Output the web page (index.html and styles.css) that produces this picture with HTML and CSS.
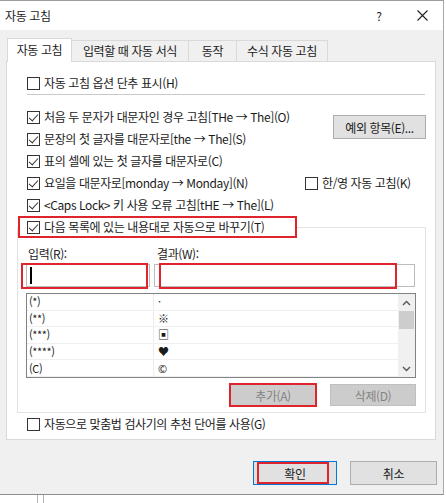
FILE: index.html
```html
<!DOCTYPE html>
<html lang="ko">
<head>
    <meta charset="UTF-8">
    <title>자동 고침</title>
    <link rel="stylesheet" href="styles.css">
</head>
<body>
    <div class="dialog">
        <div class="titlebar">
            <span class="title">자동 고침</span>
            <span class="help">?</span>
            <span class="close">
                <svg width="11" height="11" viewBox="0 0 11 11"><path d="M0.5 0.5 L10.5 10.5 M10.5 0.5 L0.5 10.5" stroke="#222" stroke-width="1.1"/></svg>
            </span>
        </div>

        <div class="content">
            <div class="tabs">
                <div class="tab active" style="width:65px">자동 고침</div>
                <div class="tab" style="width:118px">입력할 때 자동 서식</div>
                <div class="tab" style="width:49px">동작</div>
                <div class="tab" style="width:92px">수식 자동 고침</div>
            </div>

            <div class="panel">
                <label class="check indent"><span class="box"></span>자동 고침 옵션 단추 표시(H)</label>
                <div class="sep"></div>

                <div class="opts">
                    <label class="check indent"><span class="box on"></span>처음 두 문자가 대문자인 경우 고침[THe → The](O)</label>
                    <button class="btn except">예외 항목(E)...</button>
                    <label class="check indent"><span class="box on"></span>문장의 첫 글자를 대문자로[the → The](S)</label>
                    <label class="check indent"><span class="box on"></span>표의 셀에 있는 첫 글자를 대문자로(C)</label>
                    <label class="check indent"><span class="box on"></span>요일을 대문자로[monday → Monday](N)</label>
                    <label class="check side"><span class="box"></span>한/영 자동 고침(K)</label>
                    <label class="check indent span"><span class="box on"></span>&lt;Caps Lock&gt; 키 사용 오류 고침[tHE → The](L)</label>
                </div>

                <fieldset class="group">
                    <legend class="legend"><span class="box on"></span>다음 목록에 있는 내용대로 자동으로 바꾸기(T)</legend>
                    <div class="group-body">
                        <div class="fields-labels">
                            <span class="lbl first">입력(R):</span>
                            <span class="lbl">결과(W):</span>
                        </div>
                        <div class="fields">
                            <div class="field in"><span class="caret"></span><span class="mark mark-in"></span></div>
                            <div class="field out"><span class="mark mark-out"></span></div>
                        </div>

                        <div class="list">
                            <div class="rows">
                                <div class="row"><span>(*)</span><span>·</span></div>
                                <div class="row"><span>(**)</span><span>※</span></div>
                                <div class="row"><span>(***)</span><span>▣</span></div>
                                <div class="row"><span>(****)</span><span>♥</span></div>
                                <div class="row"><span>(C)</span><span>©</span></div>
                            </div>
                            <div class="scroll">
                                <div class="arrow">
                                    <svg width="9" height="6" viewBox="0 0 9 6"><path d="M1 5 L4.5 1.5 L8 5" fill="none" stroke="#555" stroke-width="1.4"/></svg>
                                </div>
                                <div class="thumb"></div>
                                <div class="track"></div>
                                <div class="arrow">
                                    <svg width="9" height="6" viewBox="0 0 9 6"><path d="M1 1 L4.5 4.5 L8 1" fill="none" stroke="#555" stroke-width="1.4"/></svg>
                                </div>
                            </div>
                        </div>

                        <div class="actions">
                            <button class="btn disabled">추가(A)<span class="mark mark-add"></span></button>
                            <button class="btn disabled">삭제(D)</button>
                        </div>
                    </div>
                </fieldset>

                <label class="check indent"><span class="box"></span>자동으로 맞춤법 검사기의 추천 단어를 사용(G)</label>
            </div>

            <div class="footer">
                <button class="btn ok">확인<span class="mark mark-ok"></span></button>
                <button class="btn cancel">취소</button>
            </div>
        </div>
    </div>
    <div class="below"><span></span><span></span></div>
</body>
</html>
```

FILE: styles.css
```css
* {
    box-sizing: border-box;
}
body {
    margin: 0;
    background: #fff;
    font-family: "Noto Sans CJK KR", "Noto Sans", sans-serif;
    font-size: 12px;
    line-height: 16px;
    letter-spacing: -0.4px;
    color: #1b1b1b;
}
.dialog {
    width: 444px;
    height: 495px;
    background: #f0f0f0;
    border-top: 1px solid #9c9c9c;
    border-right: 1px solid #a8a8a8;
    border-bottom: 1px solid #8e8e8e;
    display: flex;
    flex-direction: column;
}
.titlebar {
    height: 29px;
    background: #fff;
    display: flex;
    align-items: center;
    padding-left: 5px;
}
.title {
    flex: 1;
}
.help {
    width: 20px;
    text-align: center;
    margin-right: 28px;
}
.close {
    width: 11px;
    height: 11px;
    display: flex;
    margin-right: 15px;
}
.content {
    flex: 1;
    display: flex;
    flex-direction: column;
    padding: 8px 7px 0 6px;
}

/* 탭 */
.tabs {
    display: flex;
    align-items: flex-end;
    height: 24px;
    margin-bottom: -1px;
    padding-left: 1px;
    position: relative;
    z-index: 1;
}
.tab {
    height: 21px;
    margin-bottom: 1px;
    margin-left: -1px;
    border: 1px solid #d9d9d9;
    border-bottom: none;
    background: #f0f0f0;
    text-align: center;
    line-height: 19px;
    white-space: nowrap;
}
.tab.active {
    height: 24px;
    margin-bottom: 0;
    margin-left: 0;
    background: #fff;
    line-height: 22px;
}

/* 패널 */
.panel {
    height: 379px;
    background: #fff;
    border: 1px solid #d9d9d9;
    padding: 10px 9px 0 10px;
    display: flex;
    flex-direction: column;
}
.check {
    display: flex;
    align-items: center;
    gap: 4px;
    height: 22px;
    white-space: nowrap;
}
.indent {
    padding-left: 10px;
}
.box {
    flex: none;
    width: 13px;
    height: 13px;
    border: 1px solid #333;
    background: #fff;
    display: flex;
    align-items: center;
    justify-content: center;
}
.box.on::after {
    content: "";
    width: 8px;
    height: 4px;
    border-left: 1.3px solid #333;
    border-bottom: 1.3px solid #333;
    transform: translateY(-1px) rotate(-48deg);
}
.sep {
    height: 1px;
    width: 398px;
    margin: 0 0 11px 10px;
    background: #c9c9c9;
}
.opts {
    display: grid;
    grid-template-columns: 288px 1fr;
    grid-auto-rows: 22px;
}
.opts .indent {
    grid-column: 1;
}
.opts .side {
    grid-column: 2;
}
.opts .span {
    grid-column: 1 / 3;
}
.btn {
    font-family: inherit;
    font-size: 12px;
    letter-spacing: -0.4px;
    color: #1b1b1b;
    background: #e1e1e1;
    border: 1px solid #adadad;
    padding: 0;
    position: relative;
}
.except {
    grid-column: 2;
    grid-row: 1 / 3;
    justify-self: end;
    align-self: center;
    width: 93px;
    height: 24px;
    margin-top: -2px;
}

/* 목록 그룹 */
.group {
    margin: 0;
    padding: 0;
    min-width: 0;
    border: 1px solid #e3e3e3;
}
.legend {
    padding: 0 0 0 7px;
    width: 279px;
    height: 22px;
    border: 2px solid #e0242c;
    display: flex;
    align-items: center;
    gap: 4px;
    white-space: nowrap;
}
.group-body {
    padding: 6px 9px 6px 8px;
}
.fields-labels,
.fields {
    display: grid;
    grid-template-columns: 124px 261px;
    gap: 4px;
}
.fields-labels {
    height: 20px;
    align-items: center;
}
.lbl {
    padding-left: 3px;
}
.lbl.first {
    padding-left: 2px;
}
.field {
    height: 23px;
    border: 1px solid #bcbcbc;
    background: #fff;
    position: relative;
    display: flex;
    align-items: center;
}
.caret {
    width: 2px;
    height: 17px;
    margin-left: 3px;
    background: #000;
}
.mark {
    position: absolute;
    border: 2px solid #e0242c;
    pointer-events: none;
}
.mark-in {
    left: -6px;
    top: -2px;
    width: 127px;
    height: 26px;
}
.mark-out {
    left: 4px;
    top: -2px;
    width: 238px;
    height: 26px;
}
.list {
    margin-top: 6px;
    height: 85px;
    border: 1px solid #828282;
    background: #fff;
    display: flex;
}
.rows {
    flex: 1;
}
.row {
    display: grid;
    grid-template-columns: 127px 1fr;
    height: 16.6px;
    border-bottom: 1px solid #f0f0f0;
    align-items: center;
    font-size: 11px;
    line-height: 15px;
}
.row span:first-child {
    padding-left: 2px;
    border-right: 1px solid #ececec;
    height: 100%;
    display: flex;
    align-items: center;
}
.row span:last-child {
    padding-left: 4px;
}
.scroll {
    width: 17px;
    background: #f0f0f0;
    display: flex;
    flex-direction: column;
}
.arrow {
    height: 17px;
    display: flex;
    align-items: center;
    justify-content: center;
}
.thumb {
    height: 18px;
    margin: 0 1px;
    background: #cdcdcd;
}
.track {
    flex: 1;
}
.actions {
    margin-top: 6px;
    display: flex;
    justify-content: flex-end;
    gap: 14px;
}
.btn.disabled {
    width: 86px;
    height: 22px;
    background: #cccccc;
    border-color: #bfbfbf;
    color: #838383;
}
.mark-add {
    inset: -2px;
}

/* 하단 버튼 */
.footer {
    margin-top: 21px;
    margin-right: -1px;
    display: flex;
    justify-content: flex-end;
    gap: 13px;
}
.footer .btn {
    height: 24px;
}
.ok {
    width: 84px;
    border-color: #0078d7;
}
.mark-ok {
    left: 3px;
    top: 0;
    width: 72px;
    height: 22px;
}
.cancel {
    width: 87px;
}
.below {
    display: flex;
    gap: 5px;
    padding-left: 37px;
}
.below span {
    width: 1px;
    height: 8px;
    background: #b4b4b4;
}
```
